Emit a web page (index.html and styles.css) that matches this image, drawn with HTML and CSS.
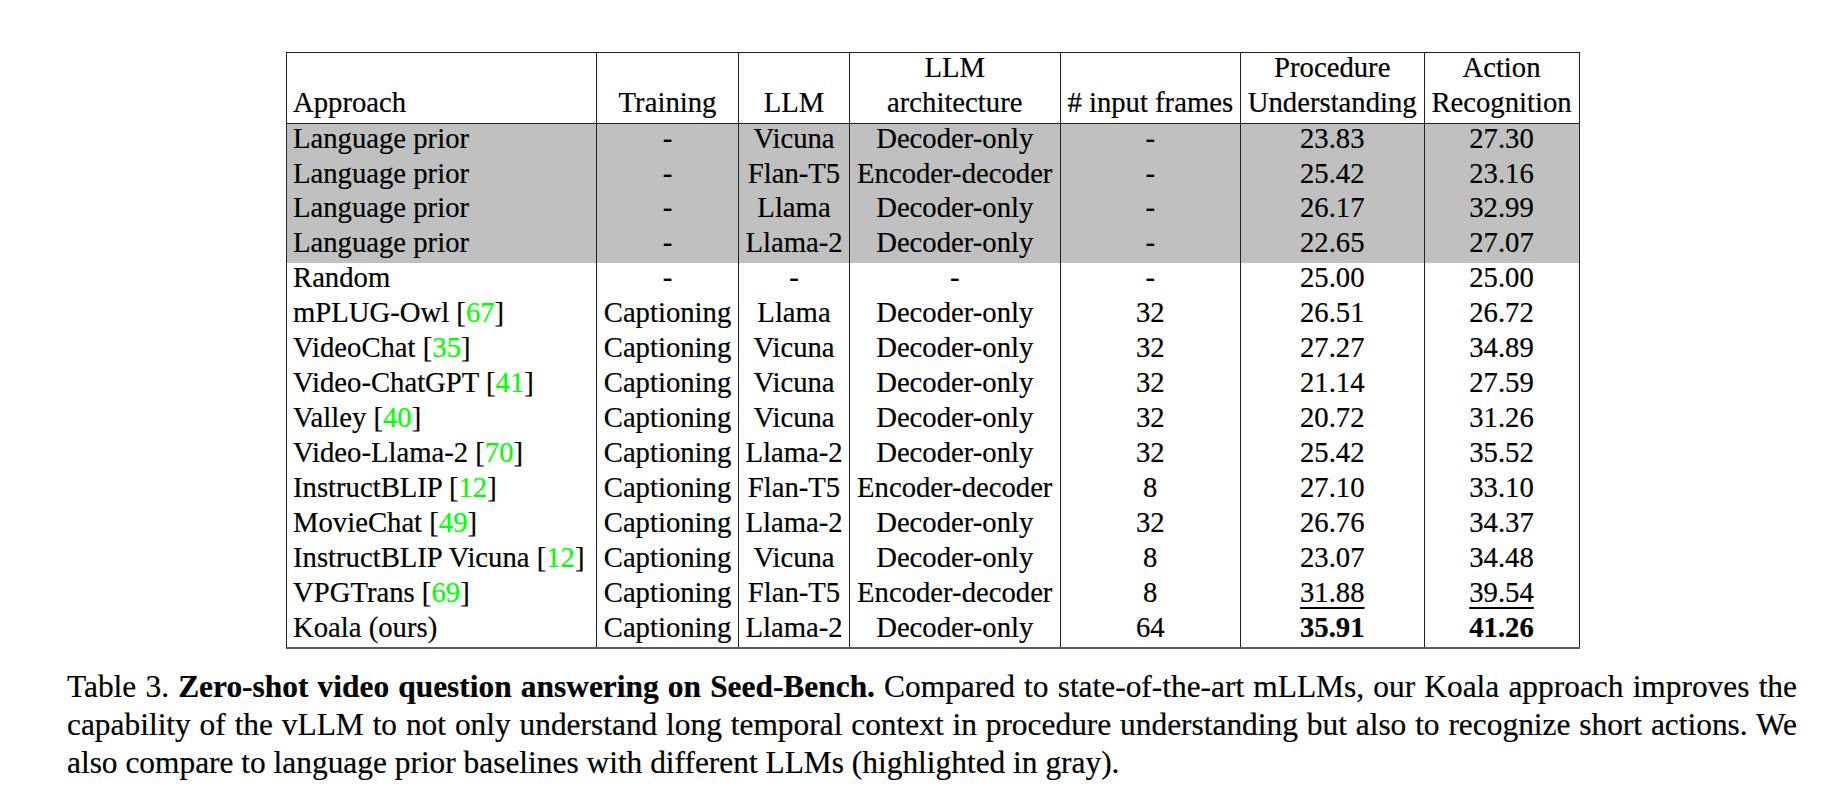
FILE: index.html
```html
<!DOCTYPE html>
<html>
<head>
<meta charset="utf-8">
<link rel="stylesheet" href="styles.css">
</head>
<body>
<div class="page">
  <div class="table-wrap">
    <table class="results">
      <colgroup>
        <col class="c-approach">
        <col class="c-training">
        <col class="c-llm">
        <col class="c-arch">
        <col class="c-frames">
        <col class="c-proc">
        <col class="c-action">
      </colgroup>
      <thead>
        <tr>
          <th class="left"><div class="hl"></div><div class="hl">Approach</div></th>
          <th><div class="hl"></div><div class="hl">Training</div></th>
          <th><div class="hl"></div><div class="hl">LLM</div></th>
          <th><div class="hl">LLM</div><div class="hl">architecture</div></th>
          <th><div class="hl"></div><div class="hl"># input frames</div></th>
          <th><div class="hl">Procedure</div><div class="hl">Understanding</div></th>
          <th><div class="hl">Action</div><div class="hl">Recognition</div></th>
        </tr>
      </thead>
      <tbody>
        <tr class="gray"><td class="left">Language prior</td><td>-</td><td>Vicuna</td><td>Decoder-only</td><td>-</td><td>23.83</td><td>27.30</td></tr>
        <tr class="gray"><td class="left">Language prior</td><td>-</td><td>Flan-T5</td><td>Encoder-decoder</td><td>-</td><td>25.42</td><td>23.16</td></tr>
        <tr class="gray"><td class="left">Language prior</td><td>-</td><td>Llama</td><td>Decoder-only</td><td>-</td><td>26.17</td><td>32.99</td></tr>
        <tr class="gray"><td class="left">Language prior</td><td>-</td><td>Llama-2</td><td>Decoder-only</td><td>-</td><td>22.65</td><td>27.07</td></tr>
        <tr><td class="left">Random</td><td>-</td><td>-</td><td>-</td><td>-</td><td>25.00</td><td>25.00</td></tr>
        <tr><td class="left">mPLUG-Owl [<span class="cite">67</span>]</td><td>Captioning</td><td>Llama</td><td>Decoder-only</td><td>32</td><td>26.51</td><td>26.72</td></tr>
        <tr><td class="left">VideoChat [<span class="cite">35</span>]</td><td>Captioning</td><td>Vicuna</td><td>Decoder-only</td><td>32</td><td>27.27</td><td>34.89</td></tr>
        <tr><td class="left">Video-ChatGPT [<span class="cite">41</span>]</td><td>Captioning</td><td>Vicuna</td><td>Decoder-only</td><td>32</td><td>21.14</td><td>27.59</td></tr>
        <tr><td class="left">Valley [<span class="cite">40</span>]</td><td>Captioning</td><td>Vicuna</td><td>Decoder-only</td><td>32</td><td>20.72</td><td>31.26</td></tr>
        <tr><td class="left">Video-Llama-2 [<span class="cite">70</span>]</td><td>Captioning</td><td>Llama-2</td><td>Decoder-only</td><td>32</td><td>25.42</td><td>35.52</td></tr>
        <tr><td class="left">InstructBLIP [<span class="cite">12</span>]</td><td>Captioning</td><td>Flan-T5</td><td>Encoder-decoder</td><td>8</td><td>27.10</td><td>33.10</td></tr>
        <tr><td class="left">MovieChat [<span class="cite">49</span>]</td><td>Captioning</td><td>Llama-2</td><td>Decoder-only</td><td>32</td><td>26.76</td><td>34.37</td></tr>
        <tr><td class="left">InstructBLIP Vicuna [<span class="cite">12</span>]</td><td>Captioning</td><td>Vicuna</td><td>Decoder-only</td><td>8</td><td>23.07</td><td>34.48</td></tr>
        <tr><td class="left">VPGTrans [<span class="cite">69</span>]</td><td>Captioning</td><td>Flan-T5</td><td>Encoder-decoder</td><td>8</td><td><span class="ul">31.88</span></td><td><span class="ul">39.54</span></td></tr>
        <tr class="last"><td class="left">Koala (ours)</td><td>Captioning</td><td>Llama-2</td><td>Decoder-only</td><td>64</td><td><b>35.91</b></td><td><b>41.26</b></td></tr>
      </tbody>
    </table>
  </div>
  <p class="caption">Table 3. <b>Zero-shot video question answering on Seed-Bench.</b> Compared to state-of-the-art mLLMs, our Koala approach improves the capability of the vLLM to not only understand long temporal context in procedure understanding but also to recognize short actions. We also compare to language prior baselines with different LLMs (highlighted in gray).</p>
</div>
</body>
</html>
```

FILE: styles.css
```css
html, body {
  margin: 0;
  padding: 0;
  background: #ffffff;
}

body {
  font-family: "Liberation Serif", serif;
  color: #000000;
}

.page {
  padding: 52px 0 0 0;
  font-family: "Liberation Serif", serif;
  -webkit-text-stroke: 0.2px currentColor;
}

.table-wrap {
  padding-left: 286px;
}

.results {
  border-collapse: collapse;
  table-layout: fixed;
  width: 1292px;
  font-family: "Liberation Serif", serif;
  font-size: 28.7px;
}

.c-approach { width: 310px; }
.c-training { width: 142px; }
.c-llm { width: 111px; }
.c-arch { width: 210.5px; }
.c-frames { width: 180.5px; }
.c-proc { width: 183.5px; }
.c-action { width: 155px; }

.results th,
.results td {
  font-family: "Liberation Serif", serif;
  border-left: 1px solid #222;
  border-right: 1px solid #222;
  text-align: center;
  white-space: nowrap;
  padding: 0 4px;
}

.results th {
  font-weight: normal;
  vertical-align: bottom;
  border-top: 1px solid #222;
  border-bottom: 1px solid #222;
  height: 70px;
  box-sizing: border-box;
}

.results .hl {
  line-height: 29.5px;
  height: 29.5px;
  padding-bottom: 5.3px;
}

.results td {
  line-height: 29.5px;
  padding-bottom: 5.43px;
  padding-top: 0;
}

.results .left {
  text-align: left;
  padding-left: 6px;
}

.results tr.gray td {
  background: #c0c0c0;
}

.results tr.last td {
  border-bottom: 2px solid #5a5a5a;
}

.cite {
  color: #00ff00;
}

.ul {
  text-decoration: underline;
  text-decoration-thickness: 1.5px;
  text-underline-offset: 5px;
}

.caption {
  margin: 19px 48px 0 67px;
  font-family: "Liberation Serif", serif;
  font-size: 31.4px;
  line-height: 38px;
  text-align: justify;
}

.caption b {
  font-weight: bold;
}
```
